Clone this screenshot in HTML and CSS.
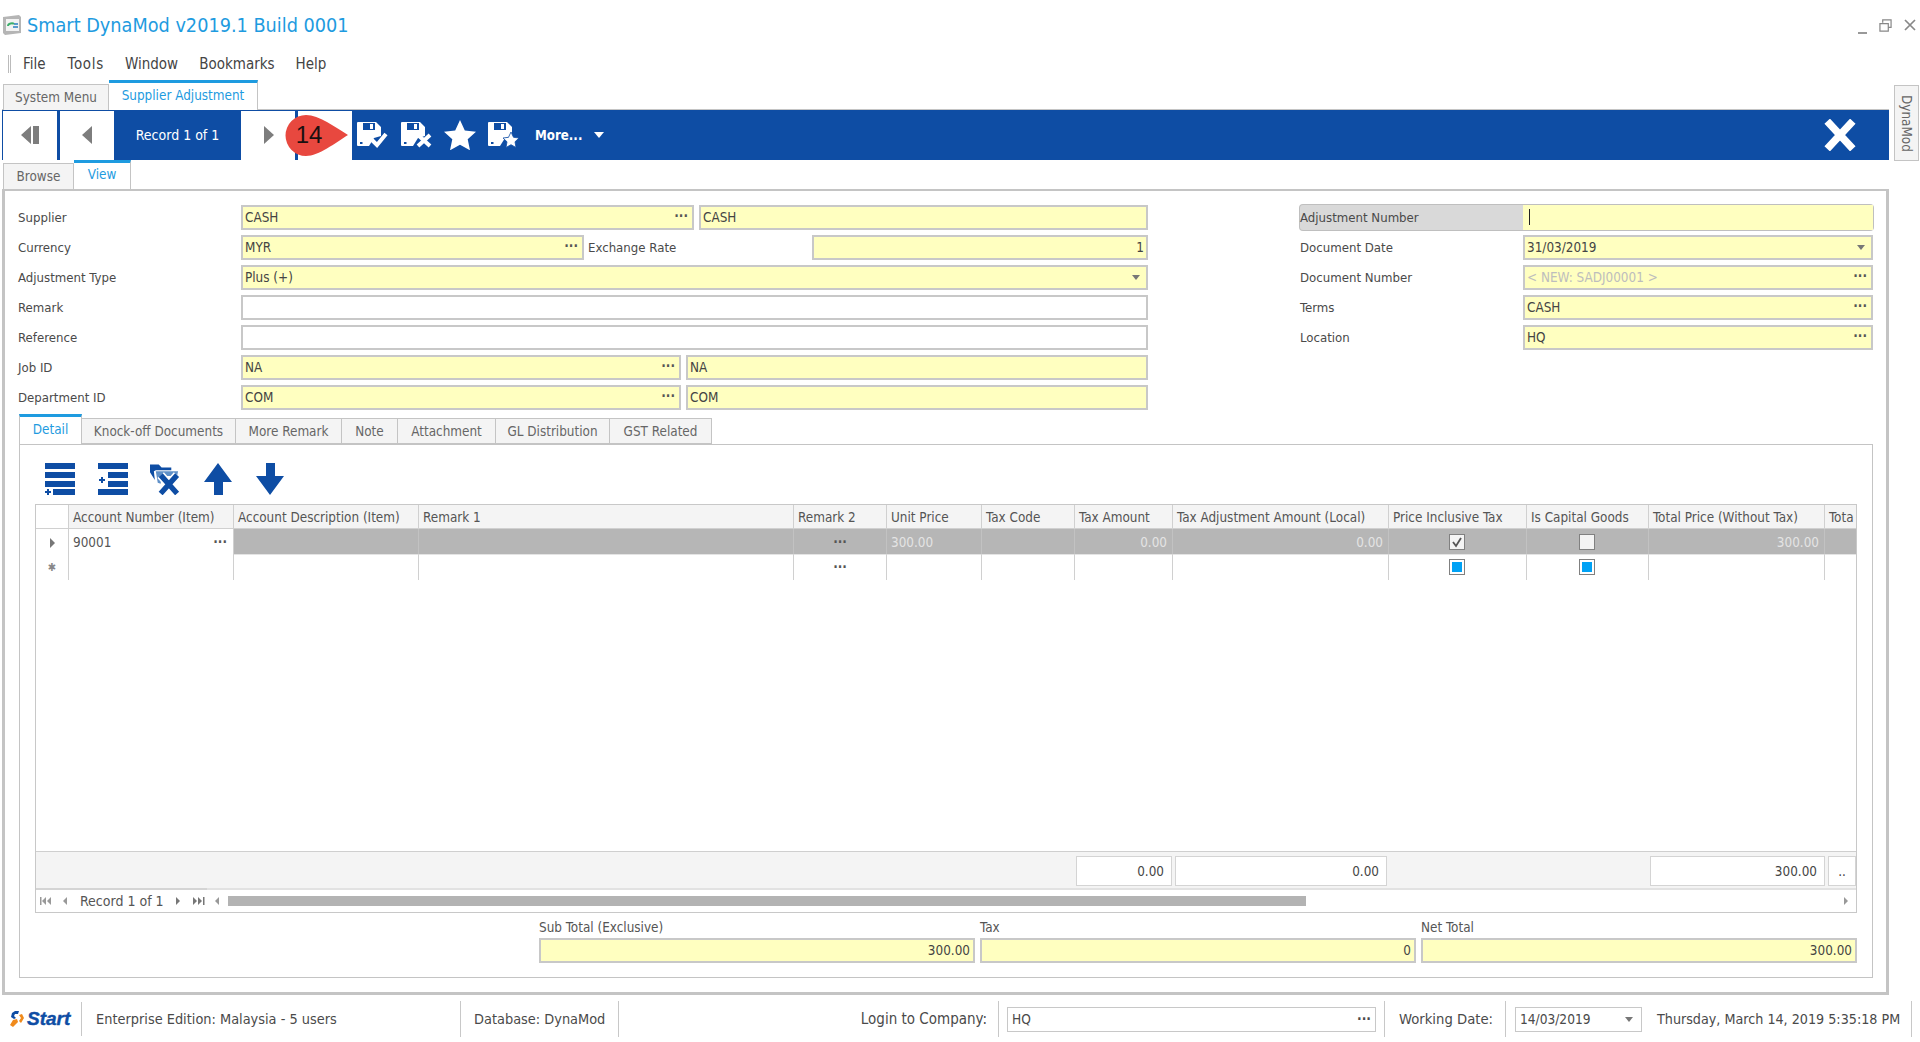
FILE: index.html
```html
<!DOCTYPE html>
<html lang="en">
<head>
<meta charset="utf-8">
<title>Smart DynaMod</title>
<link rel="stylesheet" href="styles.css">
</head>
<body>
<svg class="defs" width="0" height="0" aria-hidden="true">
  <symbol id="disk" viewBox="0 0 32 30">
    <path fill="#fff" d="M1 2H19L24 7V16L17 18 12 26H1a1 1 0 0 1-1-1V3a1 1 0 0 1 1-1z"/>
    <path fill="#0e4da4" d="M6 3h12v7H6zM3 22h2.500v2H3z"/>
    <path fill="#fff" d="M13 4h3v5h-3z"/>
  </symbol>
</svg>
<div class="app">
  <header class="titlebar">
    <svg class="appicon" viewBox="0 0 18 20"><path fill="#b5b5b5" d="M0 2l16-2 2 2v16L2 20 0 18z"/><path fill="#f2f2f2" d="M3 4h13v12H3z"/><path fill="none" stroke="#3cae6a" stroke-width="2" d="M5 11c0-3 5-3 6-2"/><path fill="none" stroke="#2a7fc0" stroke-width="1.500" d="M10 12h5M11 9h4"/></svg>
    <h1 class="apptitle">Smart DynaMod v2019.1 Build 0001</h1>
    <div class="winctl">
      <svg viewBox="0 0 10 12" class="wmin"><path d="M0 9h9" stroke="#999" stroke-width="2"/></svg>
      <svg viewBox="0 0 14 14" class="wres"><path fill="none" stroke="#888" stroke-width="1.300" d="M4 4V1h9v8h-3M1 5h9v8H1z"/></svg>
      <svg viewBox="0 0 12 12" class="wcls"><path d="M1 1l10 10M11 1L1 11" stroke="#888" stroke-width="1.700"/></svg>
    </div>
  </header>
  <nav class="menubar"><span class="grip"></span><span>File</span><span class="m-tools">Tools</span><span>Window</span><span>Bookmarks</span><span>Help</span></nav>
  <div class="doctabs">
    <span class="tab tab-sys">System Menu</span><span class="tab tab-on tab-sup">Supplier Adjustment</span>
    <span class="sidetab"><span>DynaMod</span></span>
  </div>
  <div class="toolbar">
    <button class="navbtn"><svg viewBox="0 0 24 24"><path fill="#7d7d7d" d="M13 3v18L3 12zM15 3h6v18h-6z"/></svg></button>
    <button class="navbtn"><svg viewBox="0 0 24 24"><path fill="#7d7d7d" d="M17 3v18L7 12z"/></svg></button>
    <span class="recordlabel">Record 1 of 1</span>
    <button class="navbtn"><svg viewBox="0 0 24 24"><path fill="#7d7d7d" d="M8 3v18l10-9z"/></svg></button>
    <button class="navbtn callout-host">
      <span class="callout"><svg viewBox="0 0 64 41"><path fill="#e8483f" d="M21 0C34 0 50 12 63 20 50 28 34 41 21 41A20.500 20.500 0 0 1 21 0z"/></svg><b>14</b></span>
    </button>
    <svg class="tbi" viewBox="0 0 32 30"><use href="#disk"/><path fill="none" stroke="#fff" stroke-width="4" d="M15 20l5 5 9-11"/></svg>
    <svg class="tbi" viewBox="0 0 32 30"><use href="#disk"/><path stroke="#fff" stroke-width="4" d="M17 15l12 11M29 15L17 26"/></svg>
    <svg class="tbi" viewBox="0 0 32 30"><path fill="#fff" d="M16 0l4.800 10.400 11.200 1.300-8.300 7.600 2.300 11L16 24.800 6 30.300l2.300-11L0 11.700l11.200-1.300z"/></svg>
    <svg class="tbi" viewBox="0 0 32 30"><use href="#disk"/><path fill="#fff" stroke="#0e4da4" stroke-width=".8" d="M23 12l2.500 5.300 5.500.7-4 3.800 1 5.700-5-2.800-5 2.800 1-5.700-4-3.800 5.500-.7z"/></svg>
    <span class="more">More...</span><svg class="morecaret" viewBox="0 0 10 6"><path fill="#fff" d="M0 0h10L5 6z"/></svg>
    <svg class="closex" viewBox="0 0 30 30"><path stroke="#fff" stroke-width="7" d="M3 2l24 26M27 2L3 28"/></svg>
  </div>
  <div class="viewtabs"><span class="tab tab-browse">Browse</span><span class="tab tab-on tab-view">View</span></div>
  <main class="panel">
    <section class="form">
      <div class="formleft">
        <div class="row"><label>Supplier</label><span class="f y w-453"><i>CASH</i><em>···</em></span><span class="f y grow"><i>CASH</i></span></div>
        <div class="row"><label>Currency</label><span class="f y w-343"><i>MYR</i><em>···</em></span><label class="rate">Exchange Rate</label><span class="f y grow r"><i>1</i></span></div>
        <div class="row"><label>Adjustment Type</label><span class="f y grow"><i>Plus (+)</i><svg class="dd" viewBox="0 0 8 5"><path fill="#777" d="M0 0h8L4 5z"/></svg></span></div>
        <div class="row"><label>Remark</label><span class="f grow"></span></div>
        <div class="row"><label>Reference</label><span class="f grow"></span></div>
        <div class="row"><label>Job ID</label><span class="f y w-440"><i>NA</i><em>···</em></span><span class="f y grow"><i>NA</i></span></div>
        <div class="row"><label>Department ID</label><span class="f y w-440"><i>COM</i><em>···</em></span><span class="f y grow"><i>COM</i></span></div>
      </div>
      <div class="formright">
        <div class="row active"><label>Adjustment Number</label><span class="f y grow"><u class="caret"></u></span></div>
        <div class="row"><label>Document Date</label><span class="f y grow"><i>31/03/2019</i><svg class="dd" viewBox="0 0 8 5"><path fill="#777" d="M0 0h8L4 5z"/></svg></span></div>
        <div class="row"><label>Document Number</label><span class="f y grow"><i class="muted">&lt; NEW: SADJ00001 &gt;</i><em>···</em></span></div>
        <div class="row"><label>Terms</label><span class="f y grow"><i>CASH</i><em>···</em></span></div>
        <div class="row"><label>Location</label><span class="f y grow"><i>HQ</i><em>···</em></span></div>
      </div>
    </section>
    <div class="dtabs">
      <span class="tab tab-on d1">Detail</span><span class="tab d2">Knock-off Documents</span><span class="tab d3">More Remark</span><span class="tab d4">Note</span><span class="tab d5">Attachment</span><span class="tab d6">GL Distribution</span><span class="tab d7">GST Related</span>
    </div>
    <section class="detail">
      <div class="gridtools">
        <svg viewBox="0 0 30 32" class="gt"><path fill="#0e4da4" d="M0 0h30v6H0zM0 9h30v6H0zM0 18h30v6H0zM8 26h22v6H8zM2 26h2v2h2v2H4v2H2v-2H0v-2h2z"/></svg>
        <svg viewBox="0 0 30 32" class="gt"><path fill="#0e4da4" d="M0 0h30v6H0zM10 9h20v6H10zM10 18h20v6H10zM0 26h30v6H0zM3 14h2v2h2v2H5v2H3v-2H1v-2h2z"/></svg>
        <svg viewBox="0 0 31 32" class="gt"><path fill="#0e4da4" d="M0 1h9l3 3h10v3H6l-2 1 1 9-5-8z"/><path fill="#5f90c8" d="M6 8h23l-1 5H12l-1 8-3-1z"/><path stroke="#fff" stroke-width="9" d="M11 12l16 18M28 12L12 30"/><path stroke="#0e4da4" stroke-width="5.500" d="M11 12l17 19M28 12L11 31"/></svg>
        <svg viewBox="0 0 28 32" class="gt"><path fill="#0e4da4" d="M14 0l14 19h-9v13h-9V19H0z"/></svg>
        <svg viewBox="0 0 28 32" class="gt"><path fill="#0e4da4" d="M10 0h9v13h9L14 32 0 13h10z"/></svg>
      </div>
      <div class="grid">
        <div class="ghead">
          <span class="c c0"></span><span class="c c1">Account Number (Item)</span><span class="c c2">Account Description (Item)</span><span class="c c3">Remark 1</span><span class="c c4">Remark 2</span><span class="c c5">Unit Price</span><span class="c c6">Tax Code</span><span class="c c7">Tax Amount</span><span class="c c8">Tax Adjustment Amount (Local)</span><span class="c c9">Price Inclusive Tax</span><span class="c c10">Is Capital Goods</span><span class="c c11">Total Price (Without Tax)</span><span class="c c12">Tota</span>
        </div>
        <div class="grow1">
          <span class="c c0 ind"><svg viewBox="0 0 5 10" class="ptr"><path fill="#777" d="M0 0l5 5-5 5z"/></svg></span>
          <span class="c c1 wt">90001<em>···</em></span>
          <span class="c c2"></span><span class="c c3"></span><span class="c c4 ctr">···</span><span class="c c5">300.00</span><span class="c c6"></span><span class="c c7 num">0.00</span><span class="c c8 num">0.00</span>
          <span class="c c9 ctr"><span class="cb"><svg viewBox="0 0 12 12"><path fill="none" stroke="#555" stroke-width="1.800" d="M2 6l3 4 5-8"/></svg></span></span>
          <span class="c c10 ctr"><span class="cb"></span></span>
          <span class="c c11 num">300.00</span><span class="c c12"></span>
        </div>
        <div class="grow2">
          <span class="c c0 ind star">✱</span><span class="c c1"></span><span class="c c2"></span><span class="c c3"></span><span class="c c4 ctr">···</span><span class="c c5"></span><span class="c c6"></span><span class="c c7"></span><span class="c c8"></span>
          <span class="c c9 ctr"><span class="cb ind-b"></span></span><span class="c c10 ctr"><span class="cb ind-b"></span></span>
          <span class="c c11"></span><span class="c c12"></span>
        </div>
        <div class="gspace"></div>
        <div class="gfoot">
          <span class="sum s1">0.00</span><span class="sum s2">0.00</span><span class="sum s3">300.00</span><span class="sum s4">..</span>
        </div>
        <div class="gnav">
          <svg viewBox="0 0 12 8" class="n1"><path fill="#999" d="M0 0h1.500v8H0zM6 0v8L2 4zM11 0v8L7 4z"/></svg>
          <svg viewBox="0 0 5 8" class="n2"><path fill="#999" d="M4 0v8L0 4z"/></svg>
          <span class="navtext">Record 1 of 1</span>
          <svg viewBox="0 0 5 8" class="n3"><path fill="#777" d="M0 0v8l4-4z"/></svg>
          <svg viewBox="0 0 12 8" class="n4"><path fill="#777" d="M0 0v8l4-4zM5 0v8l4-4zM10 0h1.500v8H10z"/></svg>
          <div class="hscroll">
            <svg viewBox="0 0 4 8" class="sa"><path fill="#999" d="M4 0v8L0 4z"/></svg>
            <div class="track"><div class="thumb"></div></div>
            <svg viewBox="0 0 4 8" class="sa"><path fill="#999" d="M0 0v8l4-4z"/></svg>
          </div>
        </div>
      </div>
      <div class="totals">
        <div class="tot"><label>Sub Total (Exclusive)</label><span class="f y r"><i>300.00</i></span></div>
        <div class="tot"><label>Tax</label><span class="f y r"><i>0</i></span></div>
        <div class="tot"><label>Net Total</label><span class="f y r"><i>300.00</i></span></div>
      </div>
    </section>
  </main>
  <footer class="status">
    <span class="start"><svg viewBox="0 0 14 16" class="startmark"><path fill="#0e4da4" d="M9 0H5L2 2 1 6l3 2 2-1-2-2 1-2h3z"/><path fill="#f08a1c" d="M3 9L0 14l3 2 5-5-1-3z"/><path fill="#f08a1c" d="M9 4l2 3-2 3 2 2 3-5-2-4z"/></svg><b>Start</b></span>
    <span class="sb sb1">Enterprise Edition: Malaysia - 5 users</span>
    <span class="sb sb2">Database: DynaMod</span>
    <span class="sb sb3">Login to Company:</span>
    <span class="sb sb4"><span class="sf sf-co"><i>HQ</i><em>···</em></span></span>
    <span class="sb sb5">Working Date:</span>
    <span class="sb sb6"><span class="sf sf-date"><i>14/03/2019</i><svg class="dd" viewBox="0 0 8 5"><path fill="#777" d="M0 0h8L4 5z"/></svg></span><span class="clock">Thursday, March 14, 2019 5:35:18 PM</span></span>
  </footer>
</div>
</body>
</html>
```
FILE: styles.css
```css
* { box-sizing: border-box; }
html, body { margin: 0; height: 1042px; overflow: hidden; background: #fff; }
body { font: 13.4px "DejaVu Sans", sans-serif; font-stretch: condensed; color: #4a4a4a; }
.defs { position: absolute; }
i, em { font-style: normal; }
.app { width: 1920px; height: 1042px; display: flex; flex-direction: column; }

.titlebar { height: 50px; display: flex; align-items: center; padding: 0 4px 0 3px; flex: none; }
.appicon { width: 18px; height: 20px; margin-right: 6px; }
.apptitle { margin: 0; font-size: 19.7px; font-weight: 400; color: #1e9be0; flex: 1; }
.winctl { display: flex; align-items: flex-start; height: 30px; }
.wmin { width: 10px; height: 12px; margin-right: 11px; margin-top: 14px; }
.wres { width: 13px; height: 13px; margin-right: 12px; margin-top: 9px; }
.wcls { width: 12px; height: 12px; margin-top: 9px; }

.menubar { height: 30px; flex: none; display: flex; align-items: center; padding: 0 0 3px 8px; font-size: 15px; color: #444; }
.grip { width: 3px; height: 18px; border-left: 1px solid #bbb; border-right: 1px solid #bbb; margin-right: 12px; }
.menubar span:nth-child(n+2) { margin-right: 21px; }
.menubar .m-tools { letter-spacing: .7px; margin-left: 1px; }

.tab { display: flex; align-items: center; justify-content: center; background: #f4f4f4; border: 1px solid #c4c4c4; color: #666; padding-bottom: 1px; }
.tab-on { background: #fff; color: #1e9be0; border-top: 3px solid #1e9be0; border-bottom: 0; padding-bottom: 3px; }

.doctabs { height: 30px; flex: none; display: flex; align-items: flex-end; padding-left: 3px; position: relative; }
.tab-sys { width: 106px; height: 26px; border-bottom: 0; }
.tab-sup { width: 149px; height: 30px; }
.sidetab { position: absolute; left: 1894px; top: 5px; width: 25px; height: 76px; background: #f4f4f4; border: 1px solid #c4c4c4; display: flex; align-items: center; justify-content: center; z-index: 2; color: #666; }
.sidetab span { writing-mode: vertical-rl; }

.toolbar { height: 51px; margin-top: -1px; width: 1887px; margin-left: 2px; flex: none; background: #0e4da4; display: flex; align-items: center; padding: 0 1px; color: #fff; border-top: 1px solid #c4c4c4; }
.navbtn { width: 54px; height: 49px; border: 0; padding: 0; margin-right: 3px; background: #fff; display: flex; align-items: center; justify-content: center; }
.navbtn svg { width: 24px; height: 24px; }
.recordlabel { width: 127px; margin-left: -3px; text-align: center; font-size: 14px; }
.callout-host { position: relative; margin-right: 5px; }
.callout { position: absolute; left: -13px; top: 4px; width: 64px; height: 41px; display: block; }
.navbtn .callout svg { width: 64px; height: 41px; display: block; }
.callout b { position: absolute; left: 0; width: 48px; top: 6px; font: 400 24px "Liberation Sans", sans-serif; color: #1a1010; text-align: center; }
.tbi { width: 32px; height: 30px; margin-right: 11.5px; }
.more { font-weight: 700; font-size: 13.2px; margin-left: 4px; }
.morecaret { width: 10px; height: 6px; margin-left: 12px; }
.closex { width: 32px; height: 32px; margin-left: auto; margin-right: 32px; }

.viewtabs { height: 29px; flex: none; display: flex; align-items: flex-end; padding-left: 3px; }
.tab-browse { width: 71px; height: 26px; border-bottom: 0; }
.tab-view { width: 57px; height: 29px; border-right: 1px solid #c4c4c4; }

.panel { width: 1887px; height: 806px; margin-left: 2px; flex: none; border: 2px solid #c4c4c4; border-width: 2px 3px 3px 3px; padding: 14px 13px 14px 14px; display: flex; flex-direction: column; background: #fff; }

.form { display: flex; justify-content: space-between; flex: none; margin-left: -1px; }
.formleft { width: 1130px; display: flex; flex-direction: column; gap: 5px; }
.formright { width: 573px; display: flex; flex-direction: column; gap: 5px; }
.row { height: 25px; display: flex; align-items: center; }
.row label { width: 223px; flex: none; font-size: 13.1px; padding-bottom: 1px; }
.row .rate { width: 228px; padding-left: 4px; }
.f { height: 25px; border: 2px solid #c8c8c8; background: #fff; display: flex; align-items: center; justify-content: space-between; padding: 0 2px 1px; margin-right: 5px; color: #444; }
.f:last-child { margin-right: 0; }
.y { background: #ffffc0; }
.grow { flex: 1; }
.r { justify-content: flex-end; }
.w-453 { width: 453px; flex: none; }
.w-343 { width: 343px; flex: none; margin-right: 0; }
.w-440 { width: 440px; flex: none; }
.f em { font-weight: 700; color: #555; padding-right: 2px; line-height: 1; }
.dd { width: 8px; height: 5px; margin-right: 4px; flex: none; }
.muted { color: #bdbdbd; }
.caret { display: block; width: 1px; height: 16px; background: #222; margin-left: 2px; }
.active { background: #d9d9d9; border-radius: 3px; box-shadow: 0 0 0 1px #bfbfbf; }
.active .f { border-color: #ffffc0; }

.dtabs { display: flex; height: 29px; margin-top: 5px; align-items: flex-end; flex: none; }
.dtabs .tab { height: 26px; padding-bottom: 0; }
.dtabs .tab-on { height: 30px; padding-bottom: 2px; }
.d1 { width: 63px; } .d2 { width: 154px; } .d3 { width: 106px; } .d4 { width: 56px; } .d5 { width: 98px; } .d6 { width: 114px; } .d7 { width: 102px; }
.tab + .tab { border-left: 0; }

.detail { flex: 1; border: 1px solid #c4c4c4; padding: 0 15px; display: flex; flex-direction: column; }
.gridtools { height: 59px; flex: none; display: flex; align-items: center; padding: 8px 10px 0; }
.gt { height: 32px; width: 30px; margin-right: 22.6px; flex: none; }

.grid { height: 409px; flex: none; border: 1px solid #c8c8c8; display: flex; flex-direction: column; overflow: hidden; }
.ghead, .grow1, .grow2 { display: grid; grid-template-columns: 33px 165px 185px 375px 93px 95px 93px 98px 216px 138px 122px 176px 1fr; flex: none; }
.ghead { height: 24px; background: #f4f4f4; border-bottom: 1px solid #d0d0d0; }
.ghead .c { padding-top: 1px; }
.grow1 { height: 26px; background: #b6b6b6; color: #e4e4e4; }
.grow2 { height: 25px; }
.c { display: flex; align-items: center; padding: 0 4px; border-right: 1px solid #d0d0d0; overflow: hidden; white-space: nowrap; }
.c12 { border-right: 0; }
.ghead .c { color: #555; }
.grow1 .c { border-bottom: 1px solid #e4e4e4; border-right-color: #c2c2c2; padding-top: 1px; }
.c0, .wt { background: #fff; color: #555; }
.grow1 .c0, .grow1 .wt { border-right-color: #d0d0d0; border-bottom: 0; }
.ind { justify-content: center; color: #888; }
.star { font-size: 11px; }
.ptr { width: 5px; height: 10px; }
.wt { justify-content: space-between; }
.wt em { font-weight: 700; padding-right: 2px; }
.num { justify-content: flex-end; padding-right: 5px; }
.ctr { justify-content: center; font-weight: 700; color: #555; }
.grow1 .ctr { color: #555; }
.cb { width: 16px; height: 16px; border: 1px solid #808080; background: #f4f4f4; display: flex; align-items: center; justify-content: center; padding: 1px; margin-right: 2px; }
.ind-b { background: #fff; padding: 2px; margin-bottom: 2px; }
.ind-b::before { content: ""; display: block; width: 100%; height: 100%; background: #00a2f5; }
.gspace { flex: 1; }
.gfoot { height: 39px; flex: none; background: #f4f4f4; border-top: 1px solid #cfcfcf; border-bottom: 2px solid #d4d4d4; display: flex; align-items: center; padding: 2px 0 0 1040px; }
.sum { height: 30px; background: #fff; border: 1px solid #d4d4d4; display: flex; align-items: center; justify-content: flex-end; padding-right: 7px; margin-right: 3px; color: #444; flex: none; }
.s1 { width: 96px; } .s2 { width: 212px; margin-right: 263px; } .s3 { width: 175px; } .s4 { width: 28px; justify-content: center; padding: 0; }
.gnav { height: 22px; flex: none; display: flex; align-items: center; padding-left: 4px; }
.n1 { width: 12px; height: 8px; margin-right: 11px; flex: none; }
.n2 { width: 5px; height: 8px; margin-right: 12px; flex: none; }
.navtext { width: 85px; color: #555; font-size: 14px; white-space: nowrap; flex: none; }
.n3 { width: 5px; height: 8px; margin-left: 11px; margin-right: 12px; flex: none; }
.n4 { width: 12px; height: 8px; margin-right: 2px; flex: none; }
.hscroll { flex: 1; display: flex; align-items: center; padding: 0 8px; height: 24px; border-top: 2px solid #e2e2e2; margin-top: -2px; }
.sa { width: 4px; height: 8px; flex: none; }
.track { flex: 1; margin: 0 9px; height: 10px; }
.thumb { height: 10px; width: 1078px; background: #b3b3b3; }

.totals { display: flex; justify-content: flex-end; gap: 5px; margin-top: 7px; flex: none; }
.tot { width: 436px; display: flex; flex-direction: column; }
.tot label { height: 18px; line-height: 16px; color: #555; }
.tot .f { margin: 0; padding-right: 3px; }

.status { flex: 1; display: flex; align-items: center; padding: 1px 0 0 10px; }
.start { width: 72px; height: 34px; display: flex; align-items: center; border-right: 1px solid #c8c8c8; flex: none; }
.startmark { width: 14px; height: 16px; margin-right: 3px; flex: none; }
.start b { font: italic 700 19px "Liberation Sans", sans-serif; color: #0e4da4; -webkit-text-stroke: .4px #0e4da4; }
.sb { height: 36px; display: flex; align-items: center; border-right: 1px solid #c8c8c8; font-size: 14.4px; color: #4a4a4a; flex: none; white-space: nowrap; }
.sb1 { width: 379px; padding-left: 14px; }
.sb2 { width: 158px; padding-left: 13px; }
.sb3 { width: 380px; justify-content: flex-end; padding-right: 11px; font-size: 15px; }
.sb4 { width: 386px; padding-left: 8px; }
.sb5 { width: 121px; padding: 0 0 2px 14px; font-size: 14.7px; }
.sb6 { width: 406px; padding-left: 9px; gap: 15px; font-size: 14.2px; }
.sf { height: 25px; border: 1px solid #c8c8c8; display: flex; align-items: center; justify-content: space-between; padding: 0 4px; font-size: 13.6px; }
.sf em { font-weight: 700; }
.sf-co { width: 369px; }
.sf-date { width: 127px; }
```
